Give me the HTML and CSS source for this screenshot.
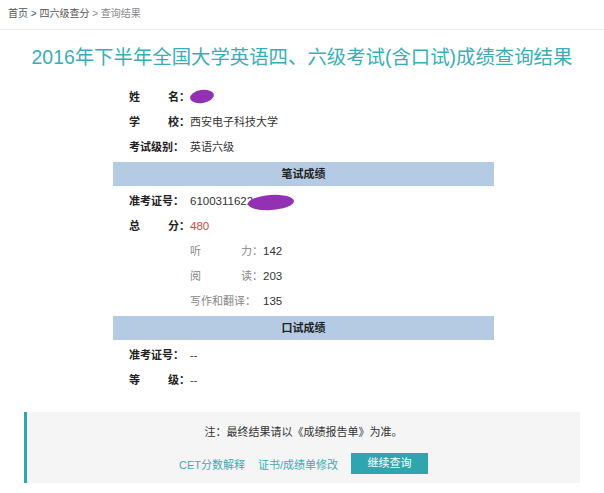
FILE: index.html
```html
<!DOCTYPE html>
<html lang="zh-CN">
<head>
<meta charset="utf-8">
<title>成绩查询结果</title>
<link rel="stylesheet" href="styles.css">
</head>
<body>
<div class="crumb"><span class="dark">首页 &gt; 四六级查分</span> &gt; 查询结果</div>
<h1 class="title">2016年下半年全国大学英语四、六级考试(含口试)成绩查询结果</h1>
<div class="result">
  <div class="row"><span class="lbl"><span>姓</span><span>名：</span></span><span class="val"><span class="blob blob-name"></span></span></div>
  <div class="row"><span class="lbl"><span>学</span><span>校：</span></span><span class="val">西安电子科技大学</span></div>
  <div class="row"><span class="lbl"><span>考试级别：</span></span><span class="val">英语六级</span></div>
  <div class="bar">笔试成绩</div>
  <div class="row"><span class="lbl"><span>准考证号：</span></span><span class="val num masked">6100311622<span class="blob blob-id"></span></span></div>
  <div class="row"><span class="lbl"><span>总</span><span>分：</span></span><span class="val num total">480</span></div>
  <div class="row sub"><span class="lbl"><span>听</span><span>力：</span></span><span class="val num">142</span></div>
  <div class="row sub"><span class="lbl"><span>阅</span><span>读：</span></span><span class="val num">203</span></div>
  <div class="row sub"><span class="lbl"><span>写作和翻译：</span></span><span class="val num">135</span></div>
  <div class="bar">口试成绩</div>
  <div class="row"><span class="lbl"><span>准考证号：</span></span><span class="val">--</span></div>
  <div class="row"><span class="lbl"><span>等</span><span>级：</span></span><span class="val">--</span></div>
</div>
<div class="note">
  <p class="note-text">注：最终结果请以《成绩报告单》为准。</p>
  <div class="actions">
    <a class="link" href="#">CET分数解释</a>
    <a class="link" href="#">证书/成绩单修改</a>
    <a class="btn" href="#">继续查询</a>
  </div>
</div>
</body>
</html>
```

FILE: styles.css
```css
* { box-sizing: border-box; }
html, body { margin: 0; padding: 0; background: #fff; }
body {
  font-family: "Liberation Sans", "Noto Sans CJK SC", sans-serif;
  color: #333;
  width: 604px;
}
.crumb {
  height: 30px;
  line-height: 28px;
  padding-left: 8px;
  font-size: 10px;
  color: #888;
  border-bottom: 1px solid #ececec;
}
.crumb .dark { color: #555; }
.title {
  margin: 13px 0 0;
  height: 28px;
  line-height: 28px;
  font-size: 19.4px;
  font-weight: normal;
  text-align: center;
  color: #3aaeb6;
}
.result {
  width: 381px;
  margin: 14px 0 0 113px;
}
.row {
  display: flex;
  height: 25px;
  line-height: 25px;
  font-size: 11px;
  padding-left: 16px;
}
.lbl {
  display: flex;
  justify-content: space-between;
  width: 61px;
  font-weight: bold;
  color: #222;
}
.val { color: #333; position: relative; }
.num { font-size: 11.5px; }
.total { color: #d9453f; }
.sub { padding-left: 77px; }
.sub .lbl { width: 73px; font-weight: normal; color: #888; }
.bar {
  height: 24px;
  line-height: 24px;
  margin: 2px 0 3px;
  background: #b5cbe3;
  text-align: center;
  font-size: 11px;
  font-weight: bold;
  color: #222;
}
.blob {
  position: absolute;
  background: #9331b4;
  border-radius: 50%;
}
.blob-name {
  left: 0; top: 5px;
  width: 24px; height: 13px;
  transform: rotate(-8deg);
}
.blob-id {
  left: 58px; top: 6px;
  width: 46px; height: 15px;
  transform: rotate(-4deg);
}
.note {
  margin: 19px 24px 0;
  height: 71px;
  padding-top: 10px;
  background: #f5f5f5;
  border-left: 3px solid #2fa5ae;
  text-align: center;
}
.note-text {
  margin: 0;
  height: 20px;
  line-height: 20px;
  font-size: 11px;
  color: #333;
}
.actions {
  margin-top: 11px;
  display: flex;
  justify-content: center;
  align-items: center;
  gap: 13px;
  font-size: 11px;
}
.link { color: #40acb5; text-decoration: none; }
.btn {
  display: inline-block;
  width: 77px;
  height: 21px;
  line-height: 21px;
  background: #2fa5ae;
  color: #fff;
  text-decoration: none;
  text-align: center;
}
```
